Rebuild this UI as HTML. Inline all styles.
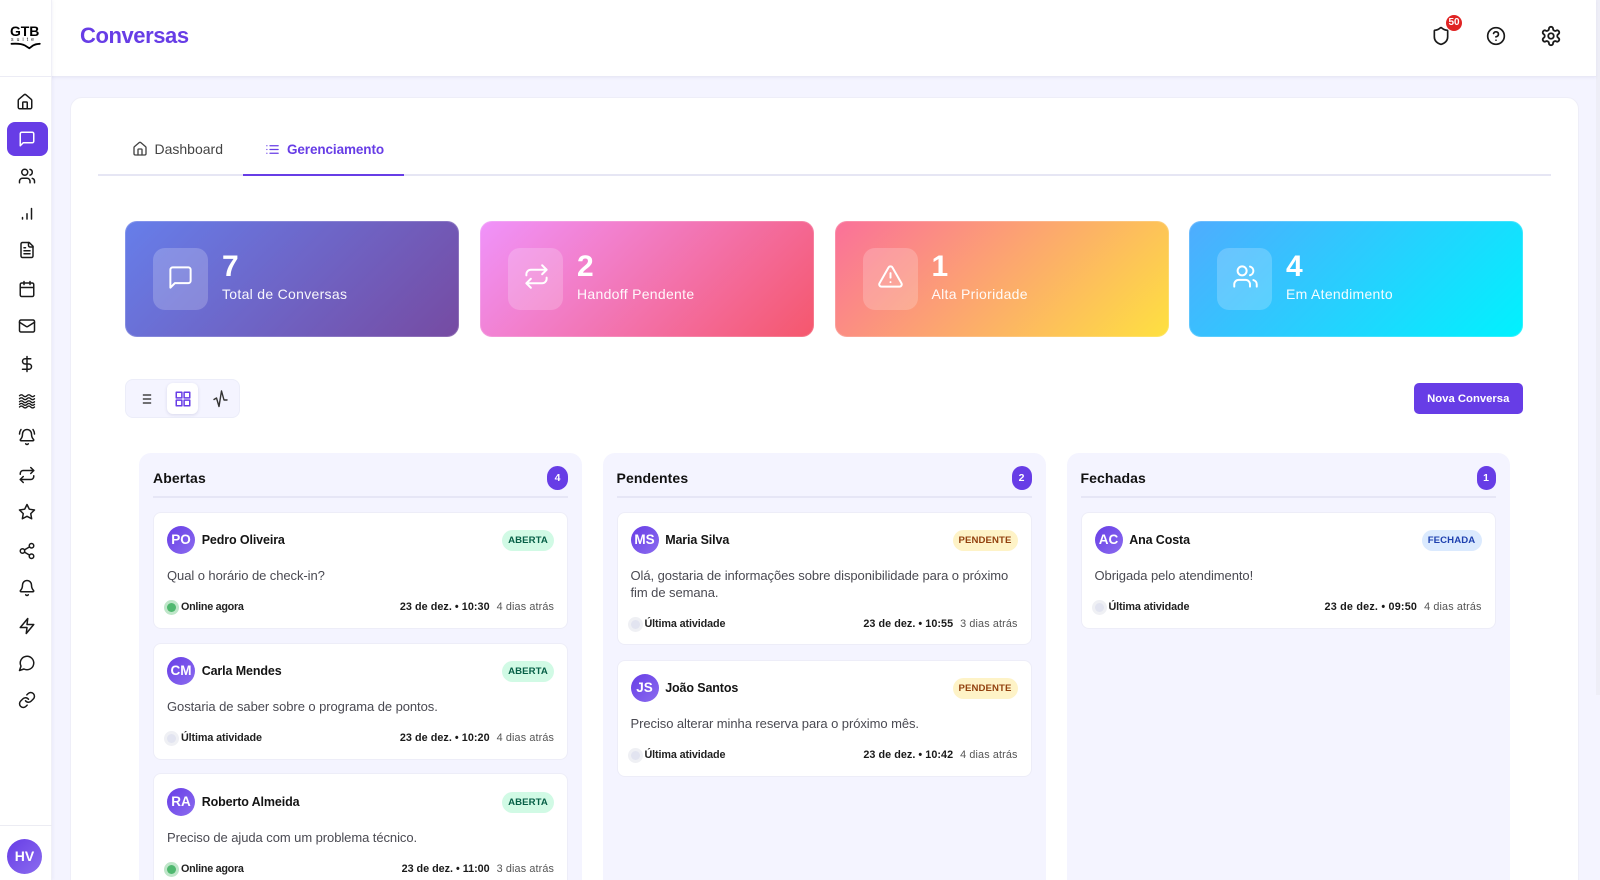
<!DOCTYPE html>
<html lang="pt-BR"><head><meta charset="utf-8"><title>Conversas</title>
<style>
*{box-sizing:border-box}
html,body{margin:0;padding:0;width:1600px;height:880px;overflow:hidden;background:#f4f4ff;font-family:"Liberation Sans",Arial,sans-serif;color:#111}
#w{position:relative;width:1600px;height:880px;overflow:hidden;background:#f4f4ff}
.a{position:absolute}
.t{position:absolute;white-space:nowrap}
svg{position:absolute;fill:none;stroke:currentColor;stroke-width:2;stroke-linecap:round;stroke-linejoin:round;overflow:visible}
.side svg{color:#1a1a1a;width:18px;height:18px;left:18px}
.stat{position:absolute;top:221px;width:334px;height:116px;border-radius:12px;box-shadow:inset 0 0 0 1px rgba(255,255,255,.18);overflow:hidden;color:#fff}
.stat .box{position:absolute;left:28px;top:27px;width:55px;height:62px;border-radius:12px;background:rgba(255,255,255,.2)}
.stat svg{left:42.5px;top:42px;width:27px;height:27px;stroke-width:1.75}
.stat .n{position:absolute;left:97px;top:28px;font-size:30px;line-height:36px;font-weight:700}
.stat .l{position:absolute;left:97px;top:63px;font-size:14px;line-height:20px;letter-spacing:.3px;white-space:nowrap;color:rgba(255,255,255,.95)}
.col{position:absolute;top:453px;width:443px;height:440px;border-radius:12px;background:#f4f4ff}
.col .h{position:absolute;left:14px;top:15px;font-size:14px;line-height:20px;font-weight:700;color:#111;letter-spacing:.1px}
.col .c{position:absolute;top:13px;height:24px;border-radius:12px;background:#673de6;color:#fff;font-size:10.5px;line-height:24px;font-weight:700;text-align:center}
.col .d{position:absolute;left:14px;width:415px;top:43px;height:2px;background:#e6e6f6}
.card{position:absolute;left:14px;width:415px;height:117px;background:#fff;border:1px solid #ededf8;border-radius:8px}
.av{position:absolute;left:13px;top:13px;width:28px;height:28px;border-radius:50%;background:linear-gradient(135deg,#673de6,#8b6cef);color:#fff;font-size:13.5px;line-height:28px;font-weight:700;text-align:center}
.nm{position:absolute;left:47.7px;top:17px;font-size:12.5px;line-height:20px;font-weight:700;letter-spacing:-.12px;white-space:nowrap;color:#141414}
.b{position:absolute;right:13px;top:17px;height:21px;border-radius:11px;font-size:9.6px;line-height:21px;font-weight:700;text-align:center;letter-spacing:.1px}
.ab{width:52px;background:#d1fae5;color:#065f46}
.pe{width:65px;background:#fef3c7;color:#92400e}
.fe{width:60px;background:#dbeafe;color:#1e40af}
.m{position:absolute;left:13px;width:390px;top:54px;font-size:13px;line-height:17px;color:#4a4a52;letter-spacing:-.07px}
.f{position:absolute;left:0;right:0;top:86px;height:16px}
.dot{position:absolute;left:13px;top:3.5px;width:9px;height:9px;border-radius:50%}
.on{background:#4fb86f;box-shadow:0 0 0 3px #bfe6c9}
.of{background:#e2e4f0;box-shadow:0 0 0 3px #eff0f4}
.st{position:absolute;left:27px;top:0;font-size:10.8px;line-height:16px;font-weight:700;color:#222;letter-spacing:-.12px;white-space:nowrap}
.on+.st{letter-spacing:-.28px}
.r{position:absolute;right:13px;top:0;display:flex;gap:7px;font-size:10.8px;line-height:16px;white-space:nowrap}
.r b{color:#1a1a1a;letter-spacing:.04px}
.r span{color:#555;letter-spacing:.13px}
.in{position:absolute;left:0;right:0;top:1px;height:0}
</style></head><body><div id="w">
<svg width="0" height="0" style="position:absolute">
<defs>
<symbol id="home" viewBox="0 0 24 24"><path d="M15 21v-8a1 1 0 0 0-1-1h-4a1 1 0 0 0-1 1v8"/><path d="M3 10a2 2 0 0 1 .709-1.528l7-5.999a2 2 0 0 1 2.582 0l7 5.999A2 2 0 0 1 21 10v9a2 2 0 0 1-2 2H5a2 2 0 0 1-2-2z"/></symbol>
<symbol id="chat" viewBox="0 0 24 24"><path d="M21 15a2 2 0 0 1-2 2H7l-4 4V5a2 2 0 0 1 2-2h14a2 2 0 0 1 2 2z"/></symbol>
<symbol id="users" viewBox="0 0 24 24"><path d="M16 21v-2a4 4 0 0 0-4-4H6a4 4 0 0 0-4 4v2"/><circle cx="9" cy="7" r="4"/><path d="M22 21v-2a4 4 0 0 0-3-3.87"/><path d="M16 3.13a4 4 0 0 1 0 7.75"/></symbol>
<symbol id="bars" viewBox="0 0 24 24"><path d="M6 20v-2"/><path d="M12 20v-7"/><path d="M18 20V6"/></symbol>
<symbol id="file" viewBox="0 0 24 24"><path d="M15 2H6a2 2 0 0 0-2 2v16a2 2 0 0 0 2 2h12a2 2 0 0 0 2-2V7z"/><path d="M14 2v4a2 2 0 0 0 2 2h4"/><path d="M10 9H8"/><path d="M16 13H8"/><path d="M16 17H8"/></symbol>
<symbol id="cal" viewBox="0 0 24 24"><path d="M8 2v4"/><path d="M16 2v4"/><rect x="3" y="4" width="18" height="18" rx="2"/><path d="M3 10h18"/></symbol>
<symbol id="mail" viewBox="0 0 24 24"><rect x="2" y="4" width="20" height="16" rx="2"/><path d="m22 7-8.97 5.7a1.94 1.94 0 0 1-2.06 0L2 7"/></symbol>
<symbol id="dollar" viewBox="0 0 24 24"><path d="M12 2v20"/><path d="M17 5H9.5a3.5 3.5 0 0 0 0 7h5a3.5 3.5 0 0 1 0 7H6"/></symbol>
<symbol id="waves" viewBox="0 0 24 24"><path d="M2 5q2.500-2.500 5 0t5 0 5 0 5 0"/><path d="M2 9q2.500-2.500 5 0t5 0 5 0 5 0"/><path d="M2 13q2.500-2.500 5 0t5 0 5 0 5 0"/><path d="M2 16.500q2.500-2.500 5 0t5 0 5 0 5 0"/><path d="M2 20q2.500-2.500 5 0t5 0 5 0 5 0"/></symbol>
<symbol id="bellring" viewBox="0 0 24 24"><path d="M10.268 21a2 2 0 0 0 3.464 0"/><path d="M22 8c0-2.300-.8-4.300-2-6"/><path d="M3.262 15.326A1 1 0 0 0 4 17h16a1 1 0 0 0 .74-1.673C19.410 13.956 18 12.499 18 8A6 6 0 0 0 6 8c0 4.499-1.411 5.956-2.738 7.326"/><path d="M4 2C2.800 3.700 2 5.700 2 8"/></symbol>
<symbol id="repeat" viewBox="0 0 24 24"><path d="m17 2 4 4-4 4"/><path d="M3 11v-1a4 4 0 0 1 4-4h14"/><path d="m7 22-4-4 4-4"/><path d="M21 13v1a4 4 0 0 1-4 4H3"/></symbol>
<symbol id="star" viewBox="0 0 24 24"><path d="M12 2l3.090 6.260L22 9.270l-5 4.870 1.180 6.880L12 17.770l-6.180 3.250L7 14.140 2 9.270l6.910-1.010z"/></symbol>
<symbol id="share" viewBox="0 0 24 24"><circle cx="18" cy="5" r="3"/><circle cx="6" cy="12" r="3"/><circle cx="18" cy="19" r="3"/><path d="M8.590 13.510l6.830 3.980"/><path d="M15.410 6.510l-6.820 3.980"/></symbol>
<symbol id="bell" viewBox="0 0 24 24"><path d="M10.268 21a2 2 0 0 0 3.464 0"/><path d="M3.262 15.326A1 1 0 0 0 4 17h16a1 1 0 0 0 .74-1.673C19.410 13.956 18 12.499 18 8A6 6 0 0 0 6 8c0 4.499-1.411 5.956-2.738 7.326"/></symbol>
<symbol id="zap" viewBox="0 0 24 24"><path d="M13 2L3 14h9l-1 8 10-12h-9z"/></symbol>
<symbol id="circ" viewBox="0 0 24 24"><path d="M7.900 20A9 9 0 1 0 4 16.100L2 22Z"/></symbol>
<symbol id="link" viewBox="0 0 24 24"><path d="M10 13a5 5 0 0 0 7.540.54l3-3a5 5 0 0 0-7.070-7.070l-1.720 1.710"/><path d="M14 11a5 5 0 0 0-7.540-.54l-3 3a5 5 0 0 0 7.070 7.070l1.710-1.710"/></symbol>
<symbol id="shield" viewBox="0 0 24 24"><path d="M20 13c0 5-3.500 7.500-7.660 8.950a1 1 0 0 1-.67-.01C7.500 20.500 4 18 4 13V6a1 1 0 0 1 1-1c2 0 4.500-1.200 6.240-2.720a1.170 1.170 0 0 1 1.520 0C14.510 3.810 17 5 19 5a1 1 0 0 1 1 1z"/></symbol>
<symbol id="help" viewBox="0 0 24 24"><circle cx="12" cy="12" r="10"/><path d="M9.090 9a3 3 0 0 1 5.830 1c0 2-3 3-3 3"/><path d="M12 17h.01"/></symbol>
<symbol id="gear" viewBox="0 0 24 24"><path d="M12.220 2h-.44a2 2 0 0 0-2 2v.18a2 2 0 0 1-1 1.730l-.43.250a2 2 0 0 1-2 0l-.15-.08a2 2 0 0 0-2.730.730l-.22.380a2 2 0 0 0 .73 2.730l.15.100a2 2 0 0 1 1 1.720v.510a2 2 0 0 1-1 1.740l-.15.090a2 2 0 0 0-.73 2.730l.22.380a2 2 0 0 0 2.730.730l.15-.08a2 2 0 0 1 2 0l.43.250a2 2 0 0 1 1 1.730V20a2 2 0 0 0 2 2h.44a2 2 0 0 0 2-2v-.18a2 2 0 0 1 1-1.730l.43-.250a2 2 0 0 1 2 0l.15.080a2 2 0 0 0 2.730-.730l.22-.390a2 2 0 0 0-.73-2.730l-.15-.080a2 2 0 0 1-1-1.740v-.5a2 2 0 0 1 1-1.740l.15-.090a2 2 0 0 0 .73-2.730l-.22-.380a2 2 0 0 0-2.730-.730l-.15.080a2 2 0 0 1-2 0l-.43-.250a2 2 0 0 1-1-1.730V4a2 2 0 0 0-2-2z"/><circle cx="12" cy="12" r="3"/></symbol>
<symbol id="alert" viewBox="0 0 24 24"><path d="m21.730 18-8-14a2 2 0 0 0-3.480 0l-8 14A2 2 0 0 0 4 21h16a2 2 0 0 0 1.730-3"/><path d="M12 9v4"/><path d="M12 17h.01"/></symbol>
<symbol id="list" viewBox="0 0 24 24"><path d="M3 12h.01"/><path d="M3 18h.01"/><path d="M3 6h.01"/><path d="M8 12h13"/><path d="M8 18h13"/><path d="M8 6h13"/></symbol>
<symbol id="grid" viewBox="0 0 24 24"><rect x="3" y="3" width="7.500" height="7.500"/><rect x="13.500" y="3" width="7.500" height="7.500"/><rect x="3" y="13.500" width="7.500" height="7.500"/><rect x="13.500" y="13.500" width="7.500" height="7.500"/></symbol>
</defs></svg>

<!-- scrollbar strip -->
<div class="a" style="left:1596px;top:0;width:4px;height:695px;background:#eeeef7"></div>

<!-- header -->
<div class="a" style="left:0;top:0;width:1596px;height:77px;background:#fff;border-bottom:1px solid #e9e9f6;box-shadow:0 1px 3px rgba(90,90,160,.08)"></div>

<!-- sidebar -->
<div class="a side" style="left:0;top:0;width:52px;height:880px;background:#fff;border-right:1px solid #f0f0f7;box-shadow:1px 0 3px rgba(90,90,160,.06)">
  <div class="a" style="left:0;top:76px;width:52px;height:1px;background:#ececf5"></div>
  <div class="t" style="left:10px;top:24px;font-size:14px;line-height:15px;font-weight:700;color:#000;letter-spacing:-.1px">GTB</div>
  <div class="t" style="left:11px;top:37.500px;font-size:5px;line-height:5px;color:#222;letter-spacing:3.100px">suite</div>
  <svg style="left:0;top:0;width:52px;height:60px;stroke-width:1.800" viewBox="0 0 52 60"><path d="M11.500 43.800Q21 43.200 25 45.500L29.300 48.300L33 45.500Q35.500 44 39.800 43.800" stroke="#000"/></svg>
  <div class="a" style="left:7px;top:122px;width:41px;height:34px;border-radius:8px;background:#673de6"></div>
  <svg style="top:93px;left:16px"><use href="#home"/></svg>
  <svg style="top:130px;color:#fff"><use href="#chat"/></svg>
  <svg style="top:167px"><use href="#users"/></svg>
  <svg style="top:204px"><use href="#bars"/></svg>
  <svg style="top:241px"><use href="#file"/></svg>
  <svg style="top:280px"><use href="#cal"/></svg>
  <svg style="top:317px"><use href="#mail"/></svg>
  <svg style="top:355px"><use href="#dollar"/></svg>
  <svg style="top:392px;stroke-width:1.800"><use href="#waves"/></svg>
  <svg style="top:428px"><use href="#bellring"/></svg>
  <svg style="top:466px"><use href="#repeat"/></svg>
  <svg style="top:503px"><use href="#star"/></svg>
  <svg style="top:542px"><use href="#share"/></svg>
  <svg style="top:579px"><use href="#bell"/></svg>
  <svg style="top:617px"><use href="#zap"/></svg>
  <svg style="top:654px"><use href="#circ"/></svg>
  <svg style="top:691px"><use href="#link"/></svg>
  <div class="a" style="left:0;top:825px;width:52px;height:1px;background:#ececf3"></div>
  <div class="a" style="left:7px;top:839px;width:35px;height:35px;border-radius:50%;background:linear-gradient(135deg,#673de6,#8b6cef);color:#fff;font-size:14px;line-height:35px;font-weight:700;text-align:center">HV</div>
</div>

<div class="t" style="left:80px;top:22px;font-size:22px;line-height:28px;font-weight:700;color:#673de6;letter-spacing:-.43px">Conversas</div>

<svg style="left:1431px;top:26px;width:20px;height:20px;color:#1a1a1a"><use href="#shield"/></svg>
<div class="a" style="left:1446px;top:15px;width:16px;height:16px;border-radius:50%;background:#e02424;color:#fff;font-size:10px;line-height:16px;font-weight:700;text-align:center">50</div>
<svg style="left:1486px;top:26px;width:20px;height:20px;color:#1a1a1a"><use href="#help"/></svg>
<svg style="left:1540px;top:25px;width:22px;height:22px;color:#1a1a1a"><use href="#gear"/></svg>

<!-- main card -->
<div class="a" style="left:70px;top:97px;width:1509px;height:800px;background:#fff;border:1px solid #eeeef8;border-radius:12px"></div>

<!-- tabs -->
<svg style="left:132px;top:141px;width:16px;height:16px;color:#444"><use href="#home"/></svg>
<div class="t" style="left:154.500px;top:139px;font-size:14px;line-height:20px;color:#444">Dashboard</div>
<svg style="left:265px;top:142px;width:15px;height:15px;color:#673de6"><use href="#list"/></svg>
<div class="t" style="left:287px;top:140px;font-size:13.500px;line-height:20px;font-weight:700;color:#673de6;letter-spacing:-.1px">Gerenciamento</div>
<div class="a" style="left:98px;top:174px;width:1453px;height:2px;background:#e6e6f4"></div>
<div class="a" style="left:243px;top:174px;width:161px;height:2px;background:#673de6"></div>

<!-- stats -->
<div class="stat" style="left:125px;background:linear-gradient(135deg,#667eea,#764ba2)"><div class="box"></div><svg style="left:42px;top:43px"><use href="#chat"/></svg><div class="n">7</div><div class="l">Total de Conversas</div></div>
<div class="stat" style="left:480px;background:linear-gradient(135deg,#f093fb,#f5576c)"><div class="box"></div><svg><use href="#repeat"/></svg><div class="n">2</div><div class="l">Handoff Pendente</div></div>
<div class="stat" style="left:834.500px;background:linear-gradient(135deg,#fa709a,#fee140)"><div class="box"></div><svg><use href="#alert"/></svg><div class="n">1</div><div class="l">Alta Prioridade</div></div>
<div class="stat" style="left:1189px;background:linear-gradient(135deg,#4facfe,#00f2fe)"><div class="box"></div><svg><use href="#users"/></svg><div class="n">4</div><div class="l">Em Atendimento</div></div>

<!-- toggle -->
<div class="a" style="left:125px;top:379px;width:115px;height:39px;background:#f4f4ff;border:1px solid #ecedf9;border-radius:8px"></div>
<div class="a" style="left:167px;top:383px;width:31px;height:31px;background:#fff;border-radius:6px;box-shadow:0 1px 3px rgba(60,60,120,.14)"></div>
<svg style="left:141.500px;top:394px;width:10px;height:10px;color:#444;stroke-width:1.800;stroke-linecap:butt" viewBox="0 0 12 12"><path d="M1 1.200h10"/><path d="M1 6h10"/><path d="M1 10.800h10"/></svg>
<svg style="left:173.500px;top:390px;width:18px;height:18px;color:#673de6"><use href="#grid"/></svg>
<svg style="left:213px;top:390px;width:15px;height:18px;color:#333;stroke-width:1.400" viewBox="0 0 15 18"><path d="M1 9.500L3.500 8L6 16.500L8.500 1L11 10L14 10"/></svg>

<div class="a" style="left:1413.500px;top:383px;width:109.500px;height:31px;background:#673de6;border-radius:5px;color:#fff;font-size:11.300px;line-height:33px;font-weight:700;text-align:center">Nova Conversa</div>

<!-- columns -->
<div class="col" style="left:139px">
  <div class="h">Abertas</div><div class="c" style="left:408px;width:21px">4</div><div class="d"></div>
  <div class="card" style="top:59px"><div class="av">PO</div><div class="nm">Pedro Oliveira</div><div class="b ab">ABERTA</div><div class="m">Qual o horário de check-in?</div><div class="f"><i class="dot on"></i><div class="st">Online agora</div><div class="r"><b>23 de dez. • 10:30</b><span>4 dias atrás</span></div></div></div>
  <div class="card" style="top:190px"><div class="av">CM</div><div class="nm">Carla Mendes</div><div class="b ab">ABERTA</div><div class="m">Gostaria de saber sobre o programa de pontos.</div><div class="f"><i class="dot of"></i><div class="st">Última atividade</div><div class="r"><b>23 de dez. • 10:20</b><span>4 dias atrás</span></div></div></div>
  <div class="card" style="top:320px"><div class="in"><div class="av">RA</div><div class="nm">Roberto Almeida</div><div class="b ab">ABERTA</div><div class="m">Preciso de ajuda com um problema técnico.</div><div class="f"><i class="dot on"></i><div class="st">Online agora</div><div class="r"><b style="letter-spacing:-.02px">23 de dez. • 11:00</b><span>3 dias atrás</span></div></div></div></div>
</div>
<div class="col" style="left:602.500px">
  <div class="h">Pendentes</div><div class="c" style="left:409px;width:20px">2</div><div class="d"></div>
  <div class="card" style="top:59px;height:133px"><div class="av">MS</div><div class="nm">Maria Silva</div><div class="b pe">PENDENTE</div><div class="m">Olá, gostaria de informações sobre disponibilidade para o próximo fim de semana.</div><div class="f" style="top:103px"><i class="dot of"></i><div class="st">Última atividade</div><div class="r"><b>23 de dez. • 10:55</b><span>3 dias atrás</span></div></div></div>
  <div class="card" style="top:207px"><div class="av">JS</div><div class="nm">João Santos</div><div class="b pe">PENDENTE</div><div class="m">Preciso alterar minha reserva para o próximo mês.</div><div class="f"><i class="dot of"></i><div class="st">Última atividade</div><div class="r"><b>23 de dez. • 10:42</b><span>4 dias atrás</span></div></div></div>
</div>
<div class="col" style="left:1066.500px">
  <div class="h">Fechadas</div><div class="c" style="left:410px;width:19px">1</div><div class="d"></div>
  <div class="card" style="top:59px"><div class="av">AC</div><div class="nm">Ana Costa</div><div class="b fe">FECHADA</div><div class="m">Obrigada pelo atendimento!</div><div class="f"><i class="dot of"></i><div class="st">Última atividade</div><div class="r"><b style="letter-spacing:.2px">23 de dez. • 09:50</b><span>4 dias atrás</span></div></div></div>
</div>
</div></body></html>
